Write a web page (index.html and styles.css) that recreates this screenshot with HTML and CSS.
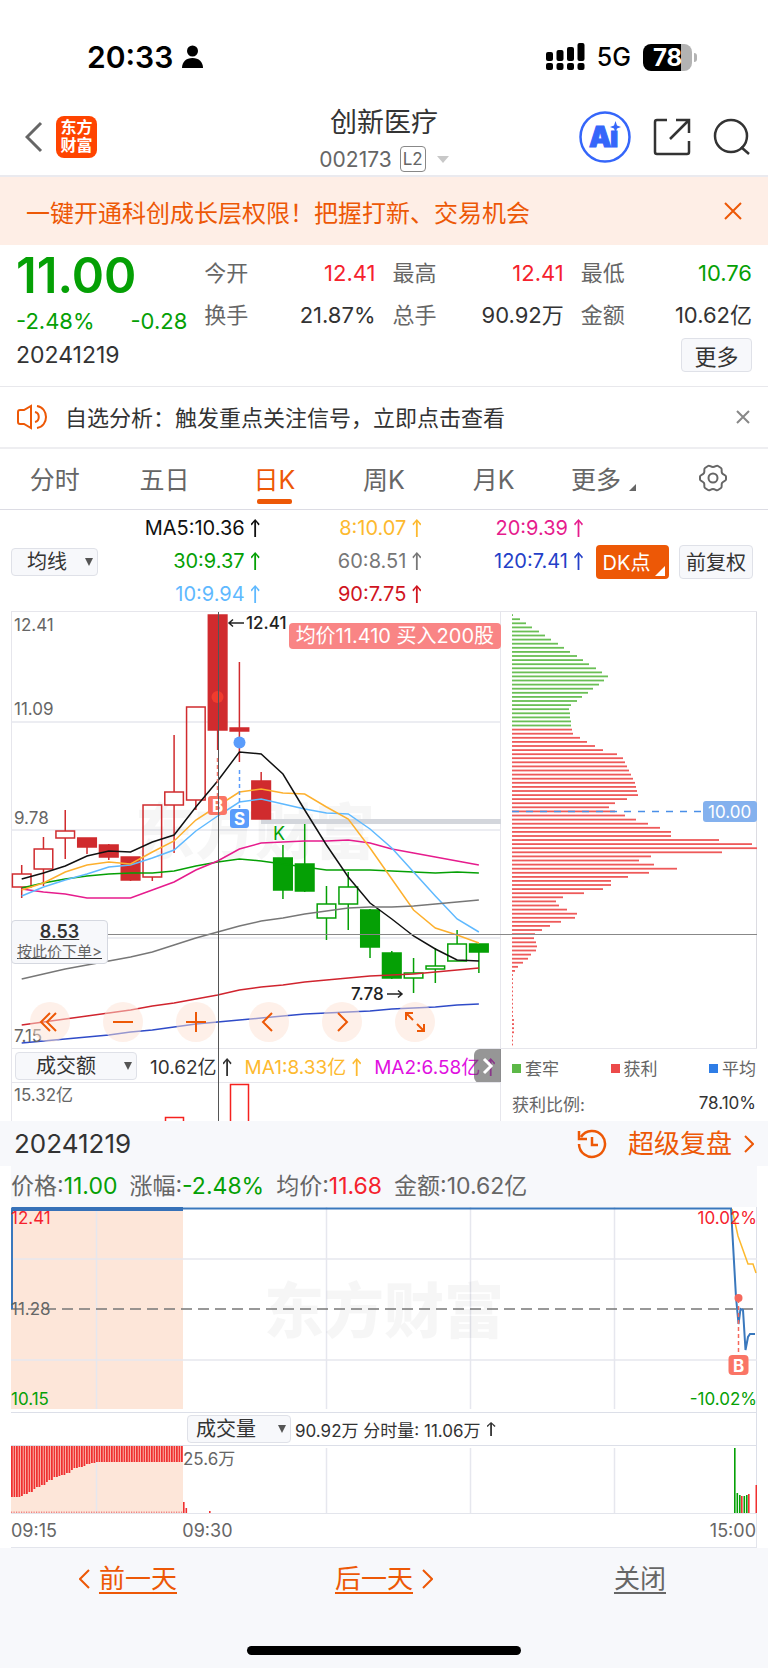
FILE: index.html
```html
<!DOCTYPE html>
<html lang="zh-CN">
<head>
<meta charset="UTF-8">
<meta name="viewport" content="width=device-width, initial-scale=1.0">
<title>创新医疗 002173</title>
<link rel="stylesheet" href="styles.css">
</head>
<body>

<div class="status-bar">
    <div class="status-left">
        <span class="clock">20:33</span>
        <svg width="21" height="24" viewBox="0 0 21 24"><circle cx="10.500" cy="6" r="5.500"/><path d="M0 23c0-6 4-10 10.500-10S21 17 21 23z"/></svg>
    </div>
    <div class="status-right">
        <svg width="39" height="28" viewBox="0 0 39 28">
            <rect x="0" y="9" width="7" height="9" rx="2"/><rect x="10.500" y="7" width="7" height="11" rx="2"/><rect x="21" y="4" width="7" height="14" rx="2"/><rect x="31.500" y="0" width="7" height="18" rx="2"/>
            <rect x="0" y="20" width="7" height="7" rx="2"/><rect x="10.500" y="20" width="7" height="7" rx="2"/><rect x="21" y="20" width="7" height="7" rx="2"/><rect x="31.500" y="20" width="7" height="7" rx="2"/>
        </svg>
        <span class="network">5G</span>
        <span class="battery">78</span>
    </div>
</div>

<header class="nav">
    <div class="nav-left">
        <button class="icon-btn" aria-label="返回">
            <svg width="18" height="32" viewBox="0 0 18 32" fill="none" stroke="#666" stroke-width="3"><path d="M16 2L2 16l14 14"/></svg>
        </button>
        <span class="logo">东方<br>财富</span>
    </div>
    <div class="nav-title">
        <h1>创新医疗</h1>
        <p>002173 <span class="l2">L2</span><span class="nav-caret"></span></p>
    </div>
    <div class="nav-right">
        <button class="icon-btn" aria-label="AI">
            <svg width="52" height="52" viewBox="0 0 52 52">
                <circle cx="26" cy="26" r="24.500" fill="none" stroke="#3566fa" stroke-width="2.500"/>
                <text x="10" y="36" class="ai-text">A<tspan x="31">ı</tspan></text>
                <path d="M36.500 10l1.500 4.500L42 16l-4 1.500-1.500 4.500-1.500-4.500L31 16l4-1.500z" fill="#3566fa"/>
            </svg>
        </button>
        <button class="icon-btn" aria-label="分享">
            <svg width="38" height="38" viewBox="0 0 38 38" fill="none" stroke="#333" stroke-width="2.500"><path d="M14 2H4a2 2 0 0 0-2 2v30a2 2 0 0 0 2 2h30a2 2 0 0 0 2-2V23M23 2h13v13M36 2L17 21"/></svg>
        </button>
        <button class="icon-btn" aria-label="搜索">
            <svg width="38" height="38" viewBox="0 0 38 38" fill="none" stroke="#333" stroke-width="2.500"><circle cx="18" cy="18" r="16"/><path d="M28 29l8 7"/></svg>
        </button>
    </div>
</header>

<div class="banner">
    <a href="#">一键开通科创成长层权限！把握打新、交易机会</a>
    <button class="icon-btn" aria-label="关闭广告">
        <svg width="18" height="18" viewBox="0 0 18 18" fill="none" stroke="#ed5806" stroke-width="2"><path d="M1 1l16 16M17 1L1 17"/></svg>
    </button>
</div>

<section class="quote">
    <div class="quote-grid">
        <div class="quote-main down">
            <div class="price">11.00</div>
            <div class="change"><span>-2.48%</span><span>-0.28</span></div>
        </div>
        <dl>
            <div><dt>今开</dt><dd class="up">12.41</dd></div>
            <div><dt>换手</dt><dd>21.87%</dd></div>
        </dl>
        <dl>
            <div><dt>最高</dt><dd class="up">12.41</dd></div>
            <div><dt>总手</dt><dd>90.92万</dd></div>
        </dl>
        <dl>
            <div><dt>最低</dt><dd class="down">10.76</dd></div>
            <div><dt>金额</dt><dd>10.62亿</dd></div>
        </dl>
    </div>
    <div class="quote-foot">
        <span class="date">20241219</span>
        <button class="box-btn more-btn">更多</button>
    </div>
</section>

<div class="notice">
    <svg width="32" height="26" viewBox="0 0 32 26" fill="none" stroke="#ed5806" stroke-width="2"><path d="M14 2v22l-7-4H3a2 2 0 0 1-2-2V8a2 2 0 0 1 2-2h4zM18 8c5 1 5 9 0 10M20 2c12 2 12 20 0 22"/></svg>
    <a href="#">自选分析：触发重点关注信号，立即点击查看</a>
    <button class="icon-btn" aria-label="关闭提示">
        <svg width="14" height="14" viewBox="0 0 14 14" fill="none" stroke="#888" stroke-width="2"><path d="M1 1l12 12M13 1L1 13"/></svg>
    </button>
</div>

<nav class="tabs">
    <button>分时</button>
    <button>五日</button>
    <button class="active">日K</button>
    <button>周K</button>
    <button>月K</button>
    <button class="tab-more">更多</button>
    <button aria-label="设置">
        <svg width="30" height="28" viewBox="0 0 30 28" fill="none" stroke="#666" stroke-width="2" stroke-linejoin="round"><path d="M10 2c1.500-1 2.500 1 5 1s3.500-2 5-1l3 2c1.500 1 0 3 1 5s4 2 4 3.500v3c0 1.500-3 1.500-4 3.500s.5 4-1 5l-3 2c-1.500 1-2.500-1-5-1s-3.500 2-5 1l-3-2c-1.500-1 0-3-1-5s-4-2-4-3.500v-3C2 11 5 11 6 9S5.500 5 7 4z"/><circle cx="15" cy="14" r="4.500"/></svg>
    </button>
</nav>

<section class="ma-bar">
    <label class="select select-ma"><select aria-label="指标"><option>均线</option></select></label>
    <ul>
        <li class="c-black">MA5:10.36<i></i></li>
        <li class="c-amber">8:10.07<i></i></li>
        <li class="c-pink">20:9.39<i></i></li>
        <li class="c-green">30:9.37<i></i></li>
        <li class="c-gray">60:8.51<i></i></li>
        <li class="c-blue">120:7.41<i></i></li>
        <li class="c-sky">10:9.94<i></i></li>
        <li class="c-red">90:7.75<i></i></li>
    </ul>
    <button class="dk-btn">DK点</button>
    <button class="box-btn adj-btn">前复权</button>
</section>

<section class="chart">
    <div class="chart-left">
        <div class="kline">
            <svg id="kline" viewBox="0 0 490 436">
                <path class="grid" d="M0 110H490M0 218H490M0 326H490"/>
                <text x="124" y="242" class="watermark">东方财富</text>
                <path d="M250 209.500H490" stroke="#d3d6dc" stroke-width="5"/>
                <g id="candles"></g>
                <g id="ma-lines" fill="none" stroke-width="1.500"></g>
                <path d="M0 322.500H490" stroke="#888" stroke-width="1"/>
                <g class="axis">
                    <text x="3" y="19">12.41</text><text x="3" y="103">11.09</text><text x="3" y="212">9.78</text><text x="3" y="430">7.15</text>
                </g>
                <g class="mark">
                    <text x="235" y="17">12.41</text><text x="340" y="388">7.78</text>
                    <path d="M218 11h15M222 7.500l-4 3.500 4 3.500M376 382h15M387 378.500l4 3.500-4 3.500"/>
                </g>
                <text x="262" y="228" class="k-flag">K</text>
                <circle cx="206.500" cy="85" r="6" fill="#f03c2e"/>
                <circle cx="228.500" cy="130.500" r="6" fill="#5a9cfb"/>
                <path d="M206.500 146v40" stroke="#f5786c" stroke-width="1.500" stroke-dasharray="4 3"/>
                <path d="M228.500 158v38" stroke="#5a9cfb" stroke-width="1.500" stroke-dasharray="4 3"/>
                <rect x="197" y="184" width="19" height="19" rx="3" fill="#fa7566"/>
                <rect x="219" y="197" width="19" height="19" rx="3" fill="#5a9cfb"/>
                <text x="206.500" y="200" class="flag">B</text>
                <text x="228.500" y="213" class="flag">S</text>
            </svg>
            <span class="trade-tip">均价11.410 买入200股</span>
            <button class="order-tip"><b>8.53</b><span>按此价下单&gt;</span></button>
            <div class="tools">
                <button aria-label="最左"><svg width="40" height="40" viewBox="0 0 40 40"><path d="M20 11l-9 9 9 9M26 11l-9 9 9 9"/></svg></button>
                <button aria-label="缩小"><svg width="40" height="40" viewBox="0 0 40 40"><path d="M10 20h20"/></svg></button>
                <button aria-label="放大"><svg width="40" height="40" viewBox="0 0 40 40"><path d="M10 20h20M20 10v20"/></svg></button>
                <button aria-label="左移"><svg width="40" height="40" viewBox="0 0 40 40"><path d="M23 11l-9 9 9 9"/></svg></button>
                <button aria-label="右移"><svg width="40" height="40" viewBox="0 0 40 40"><path d="M16 11l9 9-9 9"/></svg></button>
                <button aria-label="全屏"><svg width="40" height="40" viewBox="0 0 40 40"><path d="M18 18l-7-7M11 18v-7h7M22 22l7 7M29 22v7h-7"/></svg></button>
            </div>
        </div>
        <div class="amount-bar">
            <label class="select select-amount"><select aria-label="副图指标"><option>成交额</option></select></label>
            <span>10.62亿<i></i></span>
            <span class="c-amber">MA1:8.33亿<i></i></span>
            <span class="c-magenta">MA2:6.58亿<i></i></span>
            <button class="next-btn" aria-label="展开"><svg width="12" height="18" viewBox="0 0 12 18" fill="none" stroke="#fff" stroke-width="3"><path d="M2 2l7 7-7 7"/></svg></button>
        </div>
        <svg viewBox="0 0 490 38">
            <path d="M154.500 38V34.500h18V38M219.500 38V1.500h18V38" fill="none" stroke="#f5221f" stroke-width="1.500"/>
            <text x="3" y="18" class="axis">15.32亿</text>
        </svg>
        <span class="crosshair"></span>
    </div>
    <div class="chart-right">
        <svg id="chips" viewBox="0 0 256 436">
            <g id="chip-bars"></g>
            <path d="M11 199.500H202" stroke="#4a8fe8" stroke-width="1.500" stroke-dasharray="7 7"/>
            <rect x="202" y="189" width="54" height="21" rx="3" fill="#84b1ee"/>
            <text x="207" y="206" class="avg">10.00</text>
            <path d="M0 322.500H256" stroke="#888" stroke-width="1"/>
        </svg>
        <div class="legend"><span class="lg-green">套牢</span><span class="lg-red">获利</span><span class="lg-blue">平均</span></div>
        <div class="ratio"><span>获利比例:</span><b>78.10%</b></div>
    </div>
</section>

<section class="replay">
    <div class="replay-head">
        <h2>20241219</h2>
        <a href="#">
            <svg width="30" height="30" viewBox="0 0 30 30" fill="none" stroke="#ed5806" stroke-width="2.500"><path d="M4 8a13 13 0 1 1-2 7M2 2v8h8M15 8v8h6"/></svg>
            超级复盘
            <svg width="10" height="18" viewBox="0 0 10 18" fill="none" stroke="#ed5806" stroke-width="2"><path d="M1 1l8 8-8 8"/></svg>
        </a>
    </div>
    <div class="replay-body">
        <div class="replay-info">
            <span>价格:<em class="down">11.00</em></span>
            <span>涨幅:<em class="down">-2.48%</em></span>
            <span>均价:<em class="up">11.68</em></span>
            <span>金额:10.62亿</span>
        </div>
        <svg class="minute" viewBox="0 0 746 205">
            <rect x="0" y="1" width="172" height="201" fill="#fde6d9"/>
            <path class="grid" d="M85.500 0V202M315.500 0V202M459.500 0V202M603.500 0V202M0 52H746M0 153H746"/>
            <text x="253" y="126" class="watermark">东方财富</text>
            <path d="M0 102H746" stroke="#777" stroke-width="1.500" stroke-dasharray="11 6"/>
            <path d="M721 2l6 27 10 28h5l3 9" fill="none" stroke="#fdb92e" stroke-width="1.500"/>
            <path d="M1 102V1.500H720L725 90l2.500 27 2-15 2.500 1 2.500 40 2.500-13 2-3h5" fill="none" stroke="#3a78bd" stroke-width="2"/>
            <path d="M1 2H172" stroke="#3671b8" stroke-width="4"/>
            <circle cx="727.500" cy="91" r="4" fill="#f5685c"/>
            <path d="M727.500 92v57" stroke="#f5685c" stroke-width="1.500" stroke-dasharray="4 3"/>
            <rect x="717.500" y="148" width="20" height="20" rx="4" fill="#fa7566"/>
            <text x="727.500" y="165" class="flag">B</text>
            <g class="axis">
                <text x="0" y="17" class="up">12.41</text><text x="0" y="108">11.28</text><text x="0" y="198" class="down">10.15</text>
                <text x="746" y="17" class="up end">10.02%</text><text x="746" y="198" class="down end">-10.02%</text>
            </g>
        </svg>
        <div class="volume-bar">
            <label class="select select-volume"><select aria-label="成交指标"><option>成交量</option></select></label>
            <span>90.92万 分时量: 11.06万</span><i></i>
        </div>
        <svg id="volume" viewBox="0 0 746 67">
            <rect x="0" y="0" width="172" height="67" fill="#fde6d9"/>
            <path class="grid" d="M85.500 0V67M315.500 2V67M459.500 2V67M603.500 2V67"/>
            <g id="volume-bars"></g>
            <text x="172" y="19" class="axis">25.6万</text>
        </svg>
        <div class="times"><span>09:15</span><span>09:30</span><span>15:00</span></div>
    </div>
    <div class="replay-foot">
        <a href="#"><svg width="12" height="20" viewBox="0 0 12 20" fill="none" stroke="#ed5806" stroke-width="2"><path d="M10 1l-9 9 9 9"/></svg><u>前一天</u></a>
        <a href="#"><u>后一天</u><svg width="12" height="20" viewBox="0 0 12 20" fill="none" stroke="#ed5806" stroke-width="2"><path d="M2 1l9 9-9 9"/></svg></a>
        <a href="#" class="close-link"><u>关闭</u></a>
    </div>
    <div class="home-bar"></div>
</section>

<script src="script.js"></script>
</body>
</html>
```
FILE: styles.css
```css
* {
    box-sizing: border-box;
}
body {
    margin: 0;
    background: #fff;
    color: #333;
    font-family: Inter, "Noto Sans CJK SC", sans-serif;
    font-size: 22px;
}
h1, h2, p, ul, dl, dd {
    margin: 0;
    padding: 0;
    font-weight: 400;
}
ul {
    list-style: none;
}
a {
    color: inherit;
    text-decoration: none;
}
button, select {
    font-family: inherit;
    color: inherit;
    border: 0;
    background: none;
    padding: 0;
    cursor: pointer;
}
svg {
    display: block;
    flex: none;
}
em {
    font-style: normal;
}
.up { color: #f5222d; fill: #f5222d; }
.down { color: #05a005; fill: #05a005; }
.c-black { color: #111; }
.c-amber { color: #fdb92e; }
.c-pink { color: #e61c8d; }
.c-green { color: #05a005; }
.c-gray { color: #777; }
.c-blue { color: #2440c8; }
.c-sky { color: #5fb9ff; }
.c-red { color: #d0141e; }
.c-magenta { color: #e010e0; }

/* up arrow after indicator values */
i {
    display: inline-block;
    width: 9px;
    height: 18px;
    margin-left: 6px;
    vertical-align: -2px;
    background: currentColor;
    clip-path: polygon(50% 0, 100% 28%, 88% 36%, 60% 16%, 60% 100%, 40% 100%, 40% 16%, 12% 36%, 0 28%);
}

/* status bar */
.status-bar {
    display: flex;
    justify-content: space-between;
    align-items: center;
    height: 96px;
    padding: 18px 76px 0 87px;
    color: #000;
}
.status-left, .status-right {
    display: flex;
    align-items: center;
}
.status-left { gap: 9px; }
.status-right { gap: 12px; }
.clock {
    font-size: 30px;
    font-weight: 600;
}
.network {
    font-size: 25px;
    font-weight: 500;
}
.battery {
    position: relative;
    width: 49px;
    height: 27px;
    border-radius: 8px;
    background: linear-gradient(90deg, #000 78%, #b3b3b3 78%);
    color: #fff;
    font-size: 24px;
    font-weight: 700;
    line-height: 27px;
    text-align: center;
}
.battery::after {
    content: "";
    position: absolute;
    right: -5px;
    top: 9px;
    width: 3px;
    height: 9px;
    border-radius: 0 3px 3px 0;
    background: #b3b3b3;
}

/* header */
.nav {
    display: grid;
    grid-template-columns: 1fr auto 1fr;
    align-items: center;
    height: 81px;
    padding: 2px 17px 0;
    border-bottom: 2px solid #eaeaef;
}
.nav-left {
    display: flex;
    align-items: center;
    gap: 13px;
    padding-left: 8px;
}
.logo {
    width: 41px;
    height: 42px;
    padding-top: 2px;
    border-radius: 8px;
    background: #ff4400;
    color: #fff;
    font-size: 16px;
    font-weight: 700;
    line-height: 18px;
    text-align: center;
}
.nav-title {
    padding-top: 6px;
    text-align: center;
}
.nav-title h1 {
    font-size: 27px;
    line-height: 38px;
}
.nav-title p {
    display: flex;
    align-items: center;
    justify-content: center;
    height: 34px;
    color: #666;
    font-size: 21px;
}
.l2 {
    margin-left: 8px;
    padding: 0 2px;
    border: 1px solid #888;
    border-radius: 4px;
    font-size: 17px;
    line-height: 24px;
}
.nav-caret {
    margin-left: 11px;
    border: 6px solid transparent;
    border-top: 7px solid #c8c8c8;
    border-bottom: 0;
}
.nav-right {
    display: flex;
    align-items: center;
    justify-content: flex-end;
    gap: 22px;
}
.ai-text {
    fill: #3566fa;
    stroke: #3566fa;
    stroke-width: 1;
    font-size: 28px;
    font-weight: 900;
}

/* banner and notice */
.banner {
    display: flex;
    justify-content: space-between;
    align-items: center;
    height: 68px;
    padding: 0 26px;
    background: #feeee6;
    color: #ed5806;
    font-size: 24px;
}
.notice {
    display: flex;
    align-items: center;
    gap: 16px;
    height: 62px;
    padding: 0 18px 0 17px;
    border-bottom: 2px solid #eeeef1;
}
.notice a {
    flex: 1;
    padding-bottom: 3px;
}

/* quote */
.quote {
    padding: 7px 16px 14px;
    border-bottom: 1px solid #e8e8ec;
}
.quote-grid {
    display: grid;
    grid-template-columns: repeat(4, 1fr);
    gap: 17px;
    height: 86px;
}
.price {
    font-size: 49px;
    font-weight: 600;
    line-height: 48px;
}
.change {
    display: flex;
    justify-content: space-between;
    margin-top: 4px;
    line-height: 34px;
}
.quote dl div {
    display: flex;
    justify-content: space-between;
    line-height: 42px;
}
dt {
    color: #666;
}
.quote-foot {
    display: flex;
    justify-content: space-between;
    align-items: center;
}
.date {
    font-size: 23px;
}
.box-btn {
    height: 34px;
    border: 1px solid #dfe1e8;
    border-radius: 4px;
    background: #f7f8fb;
}
.more-btn {
    width: 71px;
    font-size: 22px;
}

/* tabs */
.tabs {
    display: grid;
    grid-template-columns: repeat(7, 1fr);
    height: 61px;
    border-bottom: 1px solid #dcdce4;
}
.tabs button {
    display: flex;
    align-items: center;
    justify-content: center;
    position: relative;
    padding-bottom: 3px;
    color: #666;
    font-size: 25px;
}
.tabs .active {
    color: #ed5806;
}
.active::after {
    content: "";
    position: absolute;
    bottom: 5px;
    width: 35px;
    height: 5px;
    border-radius: 2px;
    background: #ed5806;
}
.tab-more::after {
    content: "";
    align-self: flex-end;
    margin: 0 0 15px 8px;
    border-left: 7px solid transparent;
    border-bottom: 7px solid #666;
}

/* moving averages */
.ma-bar {
    display: flex;
    align-items: center;
    height: 101px;
    padding: 2px 15px 0 11px;
}
.ma-bar ul {
    flex: 1;
    display: grid;
    grid-template-columns: repeat(3, 1fr);
    font-size: 20px;
    line-height: 33px;
    text-align: right;
}
.select {
    position: relative;
    flex: none;
    display: block;
    height: 28px;
}
.select select {
    appearance: none;
    display: block;
    width: 100%;
    height: 100%;
    padding: 0 28px 0 15px;
    border: 1px solid #dfe1e8;
    border-radius: 4px;
    background: #f7f8fb;
    font-size: 20px;
}
.select::after {
    content: "";
    position: absolute;
    right: 5px;
    top: 10px;
    border: 4px solid transparent;
    border-top: 8px solid #555;
    border-bottom: 0;
    pointer-events: none;
}
.select-ma { width: 87px; }
.select-amount { width: 122px; }
.select-amount select { padding: 0 28px 0 20px; }
.select-volume { width: 104px; }
.select-volume select { padding: 0 28px 0 8px; }
.dk-btn {
    position: relative;
    width: 73px;
    height: 34px;
    margin: 0 10px 0 13px;
    padding: 0 12px 0 0;
    border-radius: 4px;
    background: #ed5806;
    color: #fff;
    font-size: 20px;
    white-space: nowrap;
}
.dk-btn::after {
    content: "";
    position: absolute;
    right: 4px;
    bottom: 3px;
    border-left: 10px solid transparent;
    border-bottom: 10px solid #fff;
}
.adj-btn {
    width: 74px;
    font-size: 20px;
}

/* k-line */
.chart {
    display: grid;
    grid-template-columns: 490fr 256fr;
    margin: 0 11px;
    border-top: 1px solid #e6e6ec;
}
.chart svg[viewBox^="0 0 490"], .chart #chips, .replay-body > svg {
    width: 100%;
    height: auto;
}
.chart-left {
    position: relative;
    min-width: 0;
    box-shadow: inset 1px 0 #e6e6ec, inset -1px 0 #e6e6ec;
}
.kline {
    position: relative;
}
.grid {
    fill: none;
    stroke: #e6e7ee;
    stroke-width: 1.5;
}
.watermark {
    fill: #000;
    fill-opacity: .035;
    font-size: 60px;
    font-weight: 900;
}
.axis {
    fill: #666;
    font-size: 17px;
}
.end {
    text-anchor: end;
}
.mark {
    fill: #222;
    font-size: 17px;
    font-weight: 500;
}
.mark path {
    fill: none;
    stroke: #222;
    stroke-width: 1.5;
}
.k-flag {
    fill: #05a005;
    font-size: 18px;
}
.flag {
    fill: #fff;
    font-size: 17px;
    font-weight: 700;
    text-anchor: middle;
}
.trade-tip {
    position: absolute;
    top: 11px;
    right: 0;
    padding: 0 7px;
    border-radius: 4px;
    background: #f98585;
    color: #fff;
    font-size: 20px;
    line-height: 26px;
}
.order-tip {
    position: absolute;
    top: 70.6%;
    left: 0;
    width: 97px;
    height: 44px;
    border: 1px solid #d5d8e0;
    border-radius: 4px;
    background: #f7f8fb;
    text-decoration: underline;
}
.order-tip b, .order-tip span {
    display: block;
    white-space: nowrap;
}
.order-tip b {
    font-size: 18px;
    font-weight: 600;
    line-height: 20px;
}
.order-tip span {
    color: #666;
    font-size: 15px;
    line-height: 20px;
}
.tools {
    position: absolute;
    left: 19px;
    bottom: 6px;
    display: flex;
    gap: 33px;
}
.tools button {
    border-radius: 50%;
    background: rgba(253, 226, 212, .5);
}
.tools svg {
    fill: none;
    stroke: #ed5806;
    stroke-width: 2;
}
.amount-bar {
    position: relative;
    display: flex;
    align-items: center;
    gap: 13px;
    height: 35px;
    padding-left: 4px;
    border: 1px solid #e6e6ec;
    border-width: 1px 0;
    font-size: 19px;
    white-space: nowrap;
    overflow: hidden;
}
.next-btn {
    position: absolute;
    right: 0;
    top: 0;
    display: flex;
    align-items: center;
    justify-content: center;
    width: 27px;
    height: 34px;
    border-radius: 6px 0 0 6px;
    background: rgba(80, 80, 80, .6);
}
.crosshair {
    position: absolute;
    top: 0;
    bottom: 0;
    left: 42.2%;
    width: 1px;
    background: #555;
}
#chips {
    border-bottom: 1px solid #e6e6ec;
    box-shadow: inset -1px 0 #dcdce2;
}
.avg {
    fill: #fff;
    font-size: 17px;
}
.legend, .ratio {
    display: flex;
    justify-content: space-between;
    align-items: center;
    height: 36px;
    padding: 0 1px 0 11px;
    color: #666;
    font-size: 17px;
}
.legend span::before {
    content: "";
    display: inline-block;
    width: 9px;
    height: 9px;
    margin-right: 4px;
    vertical-align: 2px;
}
.legend .lg-green::before { background: #5cb847; }
.legend .lg-red::before { background: #ec4a4a; }
.legend .lg-blue::before { background: #2e7de6; }
.ratio b {
    color: #333;
    font-weight: 400;
}

/* replay sheet */
.replay {
    padding-bottom: 13px;
    background: #f7f8fb;
}
.replay-head {
    display: flex;
    justify-content: space-between;
    align-items: center;
    height: 45px;
    padding: 0 14px;
}
.replay-head h2 {
    font-size: 26px;
}
.replay-head a {
    display: flex;
    align-items: center;
    color: #ed5806;
    font-size: 26px;
    line-height: 38px;
}
.replay-head a svg:first-child { margin-right: 21px; }
.replay-head a svg:last-child { margin-left: 12px; }
.replay-body {
    padding: 0 11px;
    background: #fff;
}
.replay-info {
    display: flex;
    gap: 12px;
    height: 41px;
    background: #f7f8fb;
    color: #666;
    font-size: 23px;
    line-height: 41px;
}
.volume-bar {
    display: flex;
    align-items: center;
    height: 34px;
    padding-left: 176px;
    border: 1px solid #dcdfe8;
    border-width: 1px 1px 1px 0;
    font-size: 17px;
}
.volume-bar span {
    margin-left: 4px;
}
.volume-bar i {
    height: 14px;
}
.minute, #volume {
    box-shadow: inset -1px 0 #dcdfe8;
}
.times {
    display: grid;
    grid-template-columns: 23% 1fr auto;
    height: 35px;
    border: 1px solid #e3e5ec;
    border-left: 0;
    color: #666;
    font-size: 18px;
    line-height: 33px;
}
.replay-foot {
    display: grid;
    grid-template-columns: repeat(3, 1fr);
    padding-top: 12px;
    color: #ed5806;
    font-size: 26px;
    line-height: 38px;
}
.replay-foot a {
    display: flex;
    align-items: center;
    justify-content: center;
    gap: 8px;
}
.replay-foot u {
    text-decoration-thickness: 2px;
    text-underline-offset: 4px;
}
.replay-foot .close-link {
    color: #666;
}
.home-bar {
    width: 274px;
    height: 9px;
    margin: 48px auto 0;
    border-radius: 5px;
    background: #000;
}
```
FILE: script.js
```javascript
var NS = 'http://www.w3.org/2000/svg';

function add(parent, tag, attrs) {
    var el = document.createElementNS(NS, tag);
    for (var key in attrs) {
        el.setAttribute(key, attrs[key]);
    }
    document.getElementById(parent).appendChild(el);
}

// x centre of the n-th trading day
function dayX(n) {
    return 10.7 + 21.77 * n;
}

// [body top, body bottom, wick top, wick bottom, filled, color]
var RED = '#d02b2e', GREEN = '#05a005';
var candles = [
    [262, 275, 253, 286, 0, RED], [237, 257, 225, 274, 0, RED], [219, 226, 198, 247, 0, RED],
    [226, 235, 226, 242, 1, RED], [233, 245, 232, 248, 1, RED], [245, 268, 245, 269, 1, RED],
    [193, 265, 193, 269, 0, RED], [180, 193, 123, 241, 0, RED], [95, 188, 95, 198, 0, RED],
    [3, 118, 3, 138, 1, RED], [116, 119, 50, 150, 1, RED], [169, 207, 160, 207, 1, RED],
    [246, 278, 233, 287, 1, GREEN], [252, 279, 212, 280, 1, GREEN], [292, 306, 274, 328, 0, GREEN],
    [275, 292, 260, 318, 0, GREEN], [298, 335, 297, 346, 1, GREEN], [341, 366, 339, 367, 1, GREEN],
    [361, 366, 346, 381, 0, GREEN], [354, 357, 336, 371, 0, GREEN], [332, 349, 318, 349, 0, GREEN],
    [332, 340, 332, 361, 1, GREEN]
];
candles.forEach(function(c, n) {
    var x = dayX(n);
    add('candles', 'path', {
        d: 'M' + x + ' ' + c[2] + 'V' + c[0] + 'M' + x + ' ' + c[1] + 'V' + c[3],
        stroke: c[5], 'stroke-width': 1.5
    });
    add('candles', 'rect', {
        x: x - 9.3, y: c[0], width: 18.6, height: c[1] - c[0],
        fill: c[4] ? c[5] : 'none', stroke: c[5], 'stroke-width': 1.5
    });
});

var averages = {
    '#05a005': [276, 271, 267, 264, 262, 261, 261, 259, 254, 250, 247, 249, 252, 255, 258, 258, 258, 259, 260, 261, 260, 261],
    '#e61c8d': [277, 280, 282, 286, 286, 286, 278, 270, 258, 249, 237, 231, 230, 229, 229, 228, 231, 237, 241, 245, 249, 253],
    '#5fb9ff': [284, 275, 268, 262, 255, 253, 246, 238, 219, 204, 190, 187, 192, 197, 201, 202, 217, 236, 260, 284, 307, 320],
    '#fdb02e': [278, 271, 260, 253, 250, 252, 240, 229, 208, 194, 180, 177, 181, 182, 195, 207, 236, 267, 298, 316, 323, 331],
    '#111': [267, 261, 254, 244, 239, 240, 230, 223, 195, 169, 140, 142, 162, 198, 233, 265, 291, 307, 324, 337, 348, 349],
    '#777': [367, 362, 357, 353, 349, 345, 340, 333, 326, 320, 314, 309, 306, 302, 299, 296, 295, 295, 294, 292, 290, 288],
    '#d0242e': [413, 410, 407, 404, 401, 398, 394, 391, 387, 383, 378, 375, 373, 370, 368, 366, 364, 363, 362, 360, 358, 356],
    '#2f4bc8': [431, 429, 427, 425, 423, 420, 418, 415, 412, 410, 408, 406, 404, 402, 401, 400, 399, 397, 396, 395, 393, 392]
};
for (var color in averages) {
    add('ma-lines', 'polyline', {
        points: averages[color].map(function(y, n) { return dayX(n) + ',' + y; }).join(' '),
        stroke: color
    });
}

// chip distribution, one bar per price level
var chips = [
    1, 8, 14, 20, 27, 33, 39, 46, 52, 58, 65, 71, 77, 84, 90, 96, 92, 87, 81, 76, 70, 65, 59, 57, 58, 58, 59, 59,
    60, 61, 68, 75, 83, 91, 105, 111, 113, 115, 117, 119, 121, 123, 124, 125, 126, 115, 103, 97, 103, 113, 124,
    136, 148, 159, 159, 207, 240, 245, 210, 139, 127, 142, 165, 137, 116, 99, 99, 91, 72, 51, 44, 47, 55, 65, 63,
    49, 38, 30, 23, 22, 24, 25, 24, 19, 16, 11, 6, 3, 1, 1, 1, 1, 1, 1, 1, 1, 1, 1, 1, 2, 2, 2, 2, 1, 1, 1
];
chips.forEach(function(w, n) {
    add('chip-bars', 'rect', {
        x: 11, y: (2.2 + 4.09 * n).toFixed(1), width: w, height: 1.8,
        fill: n < 28 ? '#6abf55' : '#ee5a5a'
    });
});

// call auction volume hangs from the top edge
var auction = [51, 51, 50, 48, 46, 43, 41, 39, 36, 34, 31, 30, 29, 27, 24, 22, 21, 20, 18, 17, 16];
for (var n = 0; n < 69; n++) {
    var h = n < 35 ? auction[Math.floor(n * 0.6)] : 16;
    add('volume-bars', 'rect', { x: n * 2.5, y: 0, width: 1.8, height: h, fill: '#f03030' });
    add('volume-bars', 'rect', { x: n * 2.5, y: 65.5, width: 1.2, height: 1.5, fill: '#f08080' });
}
// [x, height, color]
[
    [172, 11, '#f03030'], [174.500, 5, '#f03030'], [198, 2, '#f03030'],
    [723, 65, GREEN], [725.500, 20, GREEN], [728, 18, GREEN], [730, 17, '#f03030'], [732.500, 17, GREEN],
    [735, 18, GREEN], [737, 19, '#f03030'], [744.500, 28, '#f03030']
].forEach(function(b) {
    add('volume-bars', 'rect', { x: b[0], y: 67 - b[1], width: 1.6, height: b[1], fill: b[2] });
});
```
